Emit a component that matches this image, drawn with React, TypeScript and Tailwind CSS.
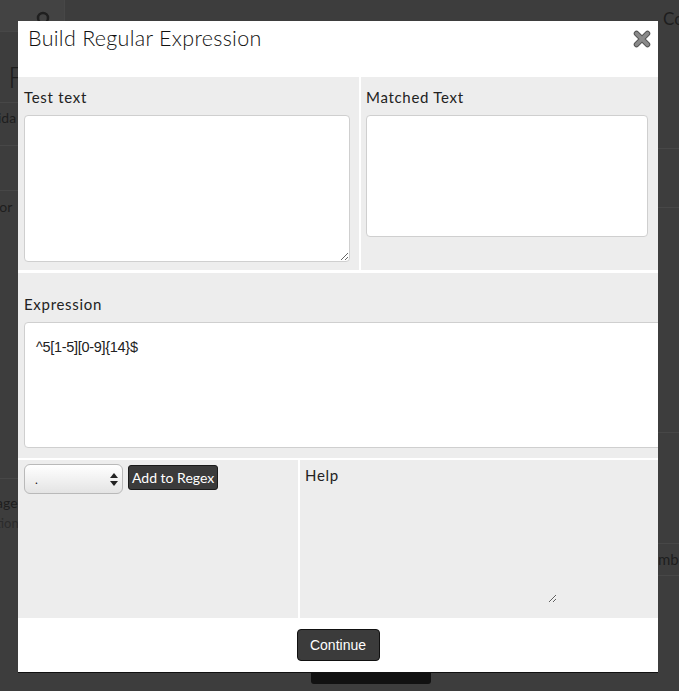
import React from "react";

const sans = "font-['Lato','Noto_Sans',sans-serif]";
const arial = "font-['Liberation_Sans',Arial,sans-serif]";

function CloseIcon() {
  return (
    <svg width="18" height="18" viewBox="0 0 18 18" aria-hidden="true">
      <path d="M3.5 3.5 L14.5 14.5 M14.5 3.5 L3.5 14.5" stroke="#555" strokeWidth="5.5" strokeLinecap="round" />
      <path d="M3.5 3.5 L14.5 14.5 M14.5 3.5 L3.5 14.5" stroke="#8a8a8a" strokeWidth="3.5" strokeLinecap="round" />
    </svg>
  );
}

// faded page behind the modal, only the edges show
function Backdrop() {
  return (
    <div className={`absolute inset-0 flex flex-col overflow-hidden bg-[#3d3d3d] text-[#1e1e1e] ${sans}`}>
      <div className="flex h-[32px] items-start justify-between">
        <div className="flex h-[32px] w-[65px] items-end justify-end border-r border-b border-[#474747] bg-[#434343] pr-[12px] pb-[4px]">
          <svg width="16" height="16" viewBox="0 0 16 16">
            <circle cx="7" cy="7" r="5" fill="none" stroke="#1f1f1f" strokeWidth="2.5" />
          </svg>
        </div>
        <span className="mt-[6px] w-[16px] overflow-hidden text-[17px]">Co</span>
      </div>
      <div className="flex flex-1 justify-between">
        <div className="flex w-[18px] flex-col overflow-hidden">
          <div className="mt-[26px] h-[45px] border-b border-[#474747] pl-[8px] text-[30px] font-light leading-[36px]">F</div>
          <div className="h-[43px] border-b border-[#474747] text-[14px] leading-[30px] -indent-[2px]">ida</div>
          <div className="h-[45px] border-b border-[#474747]" />
          <div className="h-[40px] text-[14px] leading-[32px] -indent-[4px]">ior</div>
          <div className="mt-[247px] h-[60px] border-t border-[#474747] pt-[14px] text-[14px] leading-[20px] -indent-[4px]">
            <div>age</div>
            <div className="text-[13px] text-[#2b2b2b]">tion</div>
          </div>
        </div>
        <div className="flex w-[21px] flex-col overflow-hidden">
          <div className="mt-[116px] h-[59px] border-t border-[#474747]" />
          <div className="h-[225px] border-t border-[#474747]" />
          <div className="h-[111px] border-t border-[#474747]" />
          <div className="h-[33px] border-y border-[#474747] text-[15px] leading-[31px]">mb</div>
        </div>
      </div>
      <div className="mx-auto mb-[7px] h-[16px] w-[120px] translate-x-[31px] rounded-[3px] bg-[#111]" />
    </div>
  );
}

export default function App() {
  return (
    <div className="relative h-[691px] w-[679px] overflow-hidden">
      <Backdrop />

      <div className={`absolute left-[18px] top-[21px] w-[640px] overflow-hidden border-b-[1.5px] border-[#111] bg-white ${sans} text-[#111]`}>
        <div className="flex h-[56px] items-start justify-between pl-[10px] pr-[7px] pt-[1px]">
          <h2 className="text-[21.5px] font-light tracking-[0.3px]">Build Regular Expression</h2>
          <button className="mt-[8px]" aria-label="Close">
            <CloseIcon />
          </button>
        </div>

        <div className="grid grid-cols-[341px_297px] gap-x-[2px] bg-white">
          <div className="h-[193px] bg-[#ededed] pl-[6px] pt-[10px]">
            <label className="block text-[15px] leading-[20px] tracking-[0.7px] text-[#222]">Test text</label>
            <textarea className="mt-[8px] block h-[147px] w-[326px] rounded-[4px] border border-[#cfcfcf] bg-white" />
          </div>
          <div className="h-[193px] bg-[#ededed] pl-[5px] pt-[10px]">
            <label className="block text-[15px] leading-[20px] tracking-[0.7px] text-[#222]">Matched Text</label>
            <div className="mt-[8px] h-[122px] w-[282px] rounded-[4px] border border-[#cfcfcf] bg-white" />
          </div>
        </div>

        <div className="mt-[3px] h-[185px] bg-[#ededed] pl-[6px] pt-[21px]">
          <label className="block text-[15px] leading-[20px] tracking-[0.7px] text-[#222]">Expression</label>
          <textarea
            readOnly
            value="^5[1-5][0-9]{14}$"
            className={`mt-[8px] block h-[126px] w-[650px] resize-none rounded-[4px] border border-[#cfcfcf] bg-white px-[11px] pt-[15px] text-[14.5px] leading-[18px] tracking-[-0.3px] text-[#222] outline-none ${arial}`}
          />
        </div>

        <div className="mt-[2px] grid grid-cols-[280px_358px] gap-x-[2px]">
          <div className="flex h-[158px] items-start gap-[5px] bg-[#ededed] pl-[6px] pt-[4px]">
            <div className="relative flex h-[30px] w-[99px] items-center rounded-[6px] border border-[#b9b9b9] bg-gradient-to-b from-white to-[#e4e4e4] pl-[10px] text-[12px]">
              <span className="mt-[2px]">.</span>
              <svg className="absolute right-[4px] top-[8px]" width="8" height="13" viewBox="0 0 8 13">
                <path d="M4 0 L8 5 L0 5 Z" fill="#222" />
                <path d="M0 8 L8 8 L4 13 Z" fill="#222" />
              </svg>
            </div>
            <button className="mt-[1px] h-[25px] rounded-[3px] border border-[#1a1a1a] bg-[#3b3b3b] px-[3px] text-[14px] leading-[20px] text-white">
              Add to Regex
            </button>
          </div>
          <div className="h-[158px] bg-[#ededed] pl-[5px] pt-[5px]">
            <label className="block text-[15px] leading-[20px] tracking-[0.7px] text-[#222]">Help</label>
            <textarea className="mt-[2px] block h-[116px] w-[252px] border-0 bg-transparent outline-none" />
          </div>
        </div>

        <div className="flex h-[54px] items-start justify-center pt-[11px]">
          <button className={`h-[32px] w-[83px] rounded-[4px] border border-[#111] bg-[#3b3b3b] text-[14px] text-white ${arial}`}>
            Continue
          </button>
        </div>
      </div>
    </div>
  );
}
